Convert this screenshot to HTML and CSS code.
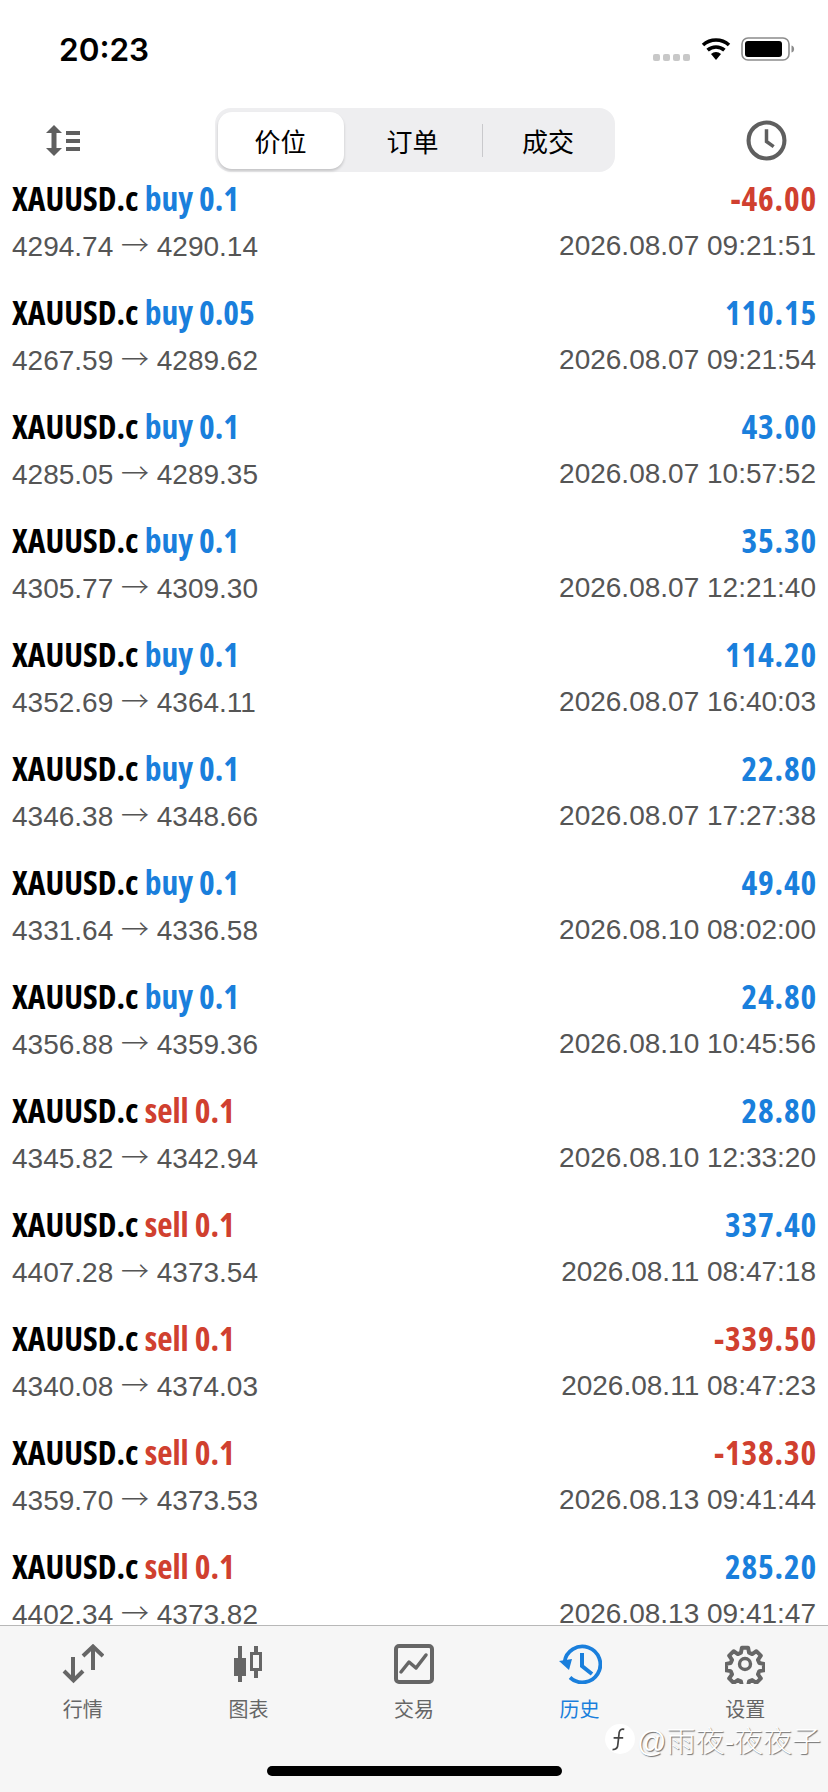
FILE: index.html
```html
<!DOCTYPE html>
<html lang="zh-CN">
  <head>
    <meta charset="UTF-8" />
    <meta name="viewport" content="width=device-width, initial-scale=1.0" />
    <title>历史</title>
    <link rel="stylesheet" href="styles.css">
  </head>
  <body>
    <div class="screen">
      <div class="status-bar">
        <span class="time">20:23</span>
        <div class="status-icons">
          <div class="signal"><i></i><i></i><i></i><i></i></div>
          <svg class="wifi" width="32" height="24" viewBox="0 0 32 24">
            <path d="M16 23l-5-6a7.500 7.500 0 0 1 10 0z" fill="#000"/>
            <path d="M7.600 13.200a12.500 12.500 0 0 1 16.800 0" fill="none" stroke="#000" stroke-width="3.600"/>
            <path d="M3 8a19.500 19.500 0 0 1 26 0" fill="none" stroke="#000" stroke-width="3.600"/>
          </svg>
          <svg class="battery" width="54" height="24" viewBox="0 0 54 24">
            <rect x="1" y="1" width="47" height="22" rx="6" fill="none" stroke="#8c8c8c" stroke-width="1.600"/>
            <rect x="4" y="4" width="37" height="16" rx="3" fill="#000"/>
            <path d="M50.500 8.500c2 .5 2.600 2 2.600 3.500s-.6 3-2.600 3.500z" fill="#8c8c8c"/>
          </svg>
        </div>
      </div>

      <div class="toolbar">
        <svg class="sort-icon" width="34" height="31" viewBox="0 0 34 31" fill="#5f5f5f">
          <path d="M8 0l8 8h-5.500v15H16l-8 8-8-8h5.500V8H0z"/>
          <rect x="20" y="6" width="14" height="4"/>
          <rect x="20" y="14" width="14" height="4"/>
          <rect x="20" y="22" width="14" height="4"/>
        </svg>
        <div class="segments">
          <div class="segment active">价位</div>
          <div class="segment">订单</div>
          <div class="segment divided">成交</div>
        </div>
        <svg class="clock-icon" width="41" height="41" viewBox="0 0 40 40" fill="none" stroke="#5f5f5f">
          <circle cx="20" cy="20" r="17.500" stroke-width="4"/>
          <path d="M20 9v12l7 5" stroke-width="3.400"/>
        </svg>
      </div>

      <div class="list" id="list"></div>

      <div class="tabbar">
        <div class="tab">
          <svg width="42" height="40" viewBox="0 0 42 40" fill="none" stroke="#666" stroke-width="4">
            <path d="M11 13v24M2 27l9.500 9.500L21 27"/>
            <path d="M31 26V3M21 12l10-9.500L41 12"/>
          </svg>
          <span>行情</span>
        </div>
        <div class="tab">
          <svg width="28" height="40" viewBox="0 0 28 40" fill="#666">
            <rect x="4" y="2" width="4" height="36"/>
            <rect x="0" y="14" width="12" height="18"/>
            <rect x="20" y="2" width="4" height="32"/>
            <rect x="17.500" y="9.500" width="9" height="16" fill="#f6f6f6" stroke="#666" stroke-width="3"/>
          </svg>
          <span>图表</span>
        </div>
        <div class="tab">
          <svg width="40" height="40" viewBox="0 0 40 40" fill="none" stroke="#666" stroke-width="4">
            <rect x="2" y="2" width="36" height="36" rx="3"/>
            <path d="M7 28l8-10 7 6 10-13" stroke-width="3.500" stroke-linecap="round" stroke-linejoin="round"/>
          </svg>
          <span>交易</span>
        </div>
        <div class="tab current">
          <svg width="44" height="40" viewBox="0 0 44 40" fill="none" stroke="#1a7fdc">
            <path d="M6.500 18A18 18 0 1 1 12 33.500" stroke-width="3.800"/>
            <path d="M1 17l13-2-3 11z" fill="#1a7fdc" stroke="none"/>
            <path d="M24 9v13l10 8" stroke-width="4"/>
          </svg>
          <span>历史</span>
        </div>
        <div class="tab">
          <svg width="40" height="40" viewBox="0 0 40 40" fill="none" stroke="#666">
            <circle cx="20" cy="20" r="5.500" stroke-width="3.400"/>
            <path d="M16.500 2h7l1 5.500 3.500 1.500 4.600-3.200 5 5-3.200 4.600 1.500 3.500 5.100 1v7l-5.100 1-1.500 3.500 3.200 4.600-5 5-4.600-3.200-3.500 1.500-1 5.100h-7l-1-5.100-3.500-1.500-4.600 3.200-5-5 3.200-4.600-1.500-3.500-5.100-1v-7l5.100-1 1.500-3.500-3.200-4.600 5-5 4.600 3.200 3.500-1.500z" transform="translate(2 2) scale(.9)" stroke-width="4.400" stroke-linejoin="round"/>
          </svg>
          <span>设置</span>
        </div>
        <div class="watermark">
          <svg width="32" height="32" viewBox="0 0 30 30">
            <circle cx="15" cy="15" r="14" fill="#fff"/>
            <path d="M19 6c-4-1-5 2-5 5l-1 9c0 3-2 5-5 5M9 14h9" fill="none" stroke="#444" stroke-width="1.600"/>
          </svg>
          <span>@雨夜-夜夜子</span>
        </div>
        <div class="home-bar"></div>
      </div>
    </div>

    <script>
      const trades = [
        ["buy 0.1", "-46.00", "4294.74", "4290.14", "2026.08.07 09:21:51"],
        ["buy 0.05", "110.15", "4267.59", "4289.62", "2026.08.07 09:21:54"],
        ["buy 0.1", "43.00", "4285.05", "4289.35", "2026.08.07 10:57:52"],
        ["buy 0.1", "35.30", "4305.77", "4309.30", "2026.08.07 12:21:40"],
        ["buy 0.1", "114.20", "4352.69", "4364.11", "2026.08.07 16:40:03"],
        ["buy 0.1", "22.80", "4346.38", "4348.66", "2026.08.07 17:27:38"],
        ["buy 0.1", "49.40", "4331.64", "4336.58", "2026.08.10 08:02:00"],
        ["buy 0.1", "24.80", "4356.88", "4359.36", "2026.08.10 10:45:56"],
        ["sell 0.1", "28.80", "4345.82", "4342.94", "2026.08.10 12:33:20"],
        ["sell 0.1", "337.40", "4407.28", "4373.54", "2026.08.11 08:47:18"],
        ["sell 0.1", "-339.50", "4340.08", "4374.03", "2026.08.11 08:47:23"],
        ["sell 0.1", "-138.30", "4359.70", "4373.53", "2026.08.13 09:41:44"],
        ["sell 0.1", "285.20", "4402.34", "4373.82", "2026.08.13 09:41:47"],
      ];

      document.getElementById("list").innerHTML = trades
        .map((t) => {
          const side = t[0].startsWith("buy") ? "blue" : "red";
          const profit = t[1].startsWith("-") ? "red" : "blue";
          return `
            <div class="row">
              <div class="row-line">
                <span class="title"><b>XAUUSD.c</b> <b class="${side}">${t[0]}</b></span>
                <span class="title right"><b class="${profit}">${t[1]}</b></span>
              </div>
              <div class="row-line sub">
                <span>${t[2]} <span class="arrow">→</span> ${t[3]}</span>
                <span>${t[4]}</span>
              </div>
            </div>`;
        })
        .join("");
    </script>
  </body>
</html>
```

FILE: styles.css
```css
html,
body {
  margin: 0;
  padding: 0;
  background: #fff;
}
.screen {
  width: 828px;
  height: 1792px;
  display: flex;
  flex-direction: column;
  overflow: hidden;
  font-family: "Liberation Sans", "Noto Sans CJK SC", sans-serif;
  color: #000;
}

/* status bar */
.status-bar {
  height: 108px;
  flex: none;
  display: flex;
  justify-content: space-between;
  align-items: flex-start;
  padding: 32px 33px 0 59px;
  box-sizing: border-box;
}
.time {
  font-family: Inter, sans-serif;
  font-size: 31.5px;
  font-weight: 600;
  line-height: 36px;
}
.status-icons {
  display: flex;
  align-items: center;
  gap: 9px;
  margin-top: 5px;
}
.signal {
  display: flex;
  gap: 3px;
  margin: 17px 1px 0 0;
}
.signal i {
  width: 7px;
  height: 7px;
  border-radius: 2px;
  background: #c8c8c8;
}

/* toolbar */
.toolbar {
  height: 64px;
  flex: none;
  display: flex;
  align-items: center;
  justify-content: space-between;
  padding: 0 41px 0 46px;
}
.segments {
  width: 400px;
  height: 64px;
  margin-left: 3px;
  display: grid;
  grid-template-columns: 126px 138px 1fr;
  box-sizing: border-box;
  padding: 4px 0 3px 3px;
  background: #eeeef0;
  border-radius: 16px;
}
.segment {
  display: flex;
  align-items: center;
  justify-content: center;
  font-size: 26px;
  position: relative;
}
.segment.active {
  background: #fff;
  border-radius: 14px;
  box-shadow: 0 2px 3px rgba(0, 0, 0, 0.18);
}
.segment.divided::before {
  content: "";
  position: absolute;
  left: 0;
  top: 12px;
  bottom: 12px;
  width: 1px;
  background: #c9c9cc;
}

/* trade list */
.list {
  flex: 1;
  min-height: 0;
  overflow: hidden;
}
.row {
  height: 114px;
  box-sizing: border-box;
  padding: 6px 12px 0;
}
.row-line {
  display: flex;
  justify-content: space-between;
  height: 40px;
  align-items: center;
}
.row-line.sub {
  height: 42px;
  margin-top: 7px;
  font-size: 28px;
  color: #555;
}
.arrow {
  font-family: "Noto Sans CJK SC", sans-serif;
  font-weight: 300;
  line-height: 1;
}
.title {
  display: inline-block;
  font-family: "Open Sans", sans-serif;
  font-size: 33.5px;
  font-stretch: condensed;
  white-space: nowrap;
}
.title.right {
  margin-right: -1px;
  letter-spacing: 0.8px;
}
.title b {
  font-weight: 700;
}
.blue {
  color: #1a7fdc;
}
.red {
  color: #d0402f;
}

/* bottom tabs */
.tabbar {
  height: 167px;
  flex: none;
  box-sizing: border-box;
  border-top: 1px solid #b8b8b8;
  background: #f6f6f6;
  display: grid;
  grid-template-columns: repeat(5, 1fr);
  position: relative;
}
.tab {
  display: flex;
  flex-direction: column;
  align-items: center;
  padding-top: 18px;
  color: #666;
  font-size: 20px;
}
.tab span {
  margin-top: 14px;
  line-height: 24px;
}
.tab.current {
  color: #1a7fdc;
}
.home-bar {
  position: absolute;
  left: 267px;
  top: 140px;
  width: 295px;
  height: 10px;
  border-radius: 5px;
  background: #000;
}
.watermark {
  position: absolute;
  left: 604px;
  top: 92px;
  display: flex;
  align-items: center;
  gap: 1px;
  font-size: 29px;
  font-weight: 300;
  color: #fff;
  text-shadow: 1px 1px 1px rgba(0, 0, 0, 0.55);
}
```
